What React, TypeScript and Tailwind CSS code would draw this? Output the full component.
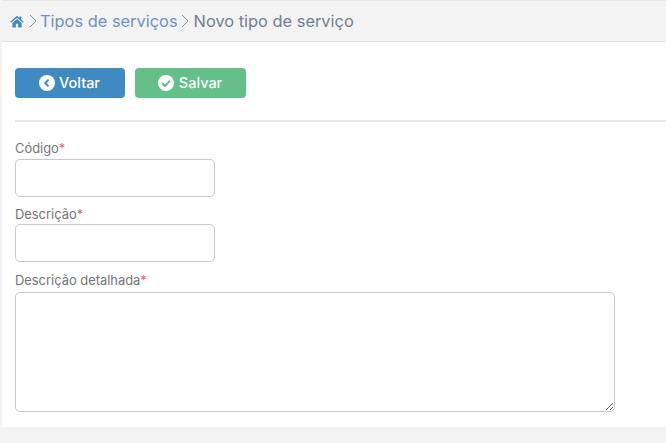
export default function App() {
  const label = "block h-[18px] text-[12.9px] leading-[18px] text-[#75757b]";
  const star = <span className="text-[#e8606f]">*</span>;
  return (
    <div className="flex h-[443px] w-[666px] flex-col overflow-hidden bg-[#f3f3f3] pl-[2px] font-['Inter',sans-serif]">
      <div className="flex h-[42px] shrink-0 items-center border-y border-t-[#e6e6e6] border-b-[#e2e2e2] pl-[8px] text-[16.4px]">
        <svg width="14" height="13" viewBox="0 0 14 13" className="mr-[5px]">
          <path d="M7 0.8 L0.3 6.8 L1.2 7.8 L7 2.8 L12.8 7.8 L13.7 6.8 L11.2 4.6 V1.4 H9.4 V3 Z M2.4 8 V12.6 H5.8 V8.8 H8.2 V12.6 H11.6 V8 L7 4 Z" fill="#3f88c0" />
        </svg>
        <svg width="8" height="14" viewBox="0 0 8 14" className="mr-[3px]">
          <path d="M1 1 L7 7 L1 13" fill="none" stroke="#7f8fa8" strokeWidth="1" />
        </svg>
        <span className="text-[#6f8fc2]">Tipos de serviços</span>
        <svg width="8" height="14" viewBox="0 0 8 14" className="ml-[3px] mr-[5px]">
          <path d="M1 1 L7 7 L1 13" fill="none" stroke="#7f8fa8" strokeWidth="1" />
        </svg>
        <span className="text-[#727f90]">Novo tipo de serviço</span>
      </div>
      <div className="flex h-[385px] shrink-0 flex-col bg-white pl-[13px]">
        <div className="flex gap-[10px] pt-[26px]">
          <button className="flex h-[30px] w-[110px] items-center justify-center gap-[4px] rounded-[4px] bg-[#3f8bc1] pr-[1px] text-[14.5px] font-medium text-white">
            <svg width="16" height="16" viewBox="0 0 16 16">
              <circle cx="8" cy="8" r="8" fill="#fff" />
              <path d="M9.5 4.6 L6.2 8 L9.5 11.4" fill="none" stroke="#3f8bc1" strokeWidth="2" />
            </svg>
            Voltar
          </button>
          <button className="flex h-[30px] w-[111px] items-center justify-center gap-[5px] rounded-[4px] bg-[#64c088] pr-[1px] text-[14.5px] font-medium text-white">
            <svg width="16" height="16" viewBox="0 0 16 16">
              <circle cx="8" cy="8" r="8" fill="#fff" />
              <path d="M4.2 8.2 L7 11 L12 5.8" fill="none" stroke="#64c088" strokeWidth="2" />
            </svg>
            Salvar
          </button>
        </div>
        <div className="mt-[22px] h-[2px] shrink-0 bg-[#e8e8e8]" />
        <div className="pt-[18px]">
          <label className={label}>Código{star}</label>
          <div className="mt-[1px] h-[38px] w-[200px] rounded-[5px] border border-[#c9c9c9]" />
          <label className={`${label} mt-[9px]`}>Descrição{star}</label>
          <div className="h-[38px] w-[200px] rounded-[5px] border border-[#c9c9c9]" />
          <label className={`${label} mt-[10px]`}>Descrição detalhada{star}</label>
          <textarea className="mt-[2px] block h-[120px] w-[600px] rounded-[5px] border border-[#c9c9c9] outline-none" />
        </div>
      </div>
    </div>
  );
}
